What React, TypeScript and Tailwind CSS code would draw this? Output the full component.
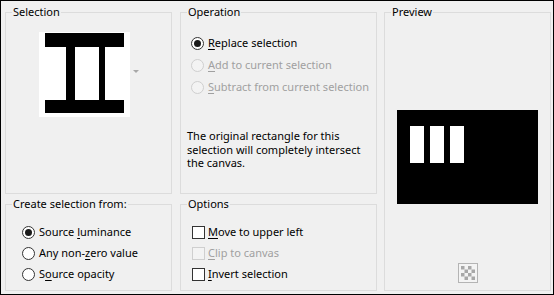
import React from 'react';

const font = { fontFamily: '"Noto Sans", "Liberation Sans", sans-serif' };

function Group({ label, className, children }: { label: string; className: string; children: React.ReactNode }) {
  return (
    <fieldset className={`border border-[#dcdcdc] box-border ${className}`}>
      <legend className="ml-[6px] px-[1px] text-[11px] leading-[16px] text-black">{label}</legend>
      {children}
    </fieldset>
  );
}

function Radio({ checked, disabled }: { checked?: boolean; disabled?: boolean }) {
  return (
    <span
      className={`flex items-center justify-center w-[13px] h-[13px] rounded-full border shrink-0 ${
        disabled ? 'border-[#cfcfcf] bg-[#f3f3f3]' : 'border-[#333333] bg-white'
      }`}
    >
      {checked && <span className="w-[7px] h-[7px] rounded-full bg-[#1a1a1a]" />}
    </span>
  );
}

function Check({ disabled }: { disabled?: boolean }) {
  return (
    <span
      className={`w-[13px] h-[13px] border shrink-0 ${
        disabled ? 'border-[#cfcfcf] bg-[#f3f3f3]' : 'border-[#333333] bg-white'
      }`}
    />
  );
}

// label with one underlined access key
function Lbl({ pre = '', k, post, disabled }: { pre?: string; k: string; post: string; disabled?: boolean }) {
  return (
    <span className={`text-[11px] whitespace-nowrap ${disabled ? 'text-[#a0a0a0]' : 'text-black'}`}>
      {pre}
      <span className="underline underline-offset-2">{k}</span>
      {post}
    </span>
  );
}

export default function App() {
  return (
    <div className="w-[554px] h-[295px] border border-black bg-[#f0f0f0] box-border pl-[4px] pt-[3px] flex" style={font}>
      {/* left column */}
      <div className="flex flex-col gap-[2px] w-[167px] shrink-0">
        <Group label="Selection" className="h-[190px]">
          <div className="flex justify-center items-center pt-[12px] pl-[1px]">
            <svg width="91" height="85" viewBox="0 0 91 85">
              <rect width="91" height="85" fill="#fff" />
              <rect x="6" y="1" width="79" height="14" fill="#000" />
              <rect x="6" y="68" width="79" height="13" fill="#000" />
              <rect x="27" y="15" width="9" height="53" fill="#000" />
              <rect x="60" y="15" width="6" height="53" fill="#000" />
            </svg>
            <svg width="6" height="4" viewBox="0 0 6 4" className="ml-[3px] -mt-[5px]">
              <path d="M0 0h6L3 3z" fill="#a8a8a8" />
            </svg>
          </div>
        </Group>
        <Group label="Create selection from:" className="h-[95px]">
          <div className="pl-[16px] pt-[10px] flex flex-col">
            <div className="h-[21px] flex items-center gap-[4px]">
              <Radio checked />
              <Lbl pre="Source " k="l" post="uminance" />
            </div>
            <div className="h-[21px] flex items-center gap-[4px]">
              <Radio />
              <Lbl pre="Any non-" k="z" post="ero value" />
            </div>
            <div className="h-[21px] flex items-center gap-[4px]">
              <Radio />
              <Lbl pre="S" k="o" post="urce opacity" />
            </div>
          </div>
        </Group>
      </div>

      {/* middle column */}
      <div className="flex flex-col gap-[2px] w-[197px] ml-[8px] shrink-0">
        <Group label="Operation" className="h-[190px]">
          <div className="pl-[10px] pt-[12px] flex flex-col">
            <div className="h-[22px] flex items-center gap-[4px]">
              <Radio checked />
              <Lbl k="R" post="eplace selection" />
            </div>
            <div className="h-[22px] flex items-center gap-[4px]">
              <Radio disabled />
              <Lbl k="A" post="dd to current selection" disabled />
            </div>
            <div className="h-[22px] flex items-center gap-[4px]">
              <Radio disabled />
              <Lbl k="S" post="ubtract from current selection" disabled />
            </div>
          </div>
          <p className="mt-[31px] pl-[6px] pr-[8px] text-[11px] leading-[13.5px] text-black">
            The original rectangle for this selection will completely intersect the canvas.
          </p>
        </Group>
        <Group label="Options" className="h-[95px]">
          <div className="pl-[11px] pt-[10px] flex flex-col">
            <div className="h-[21px] flex items-center gap-[3px]">
              <Check />
              <Lbl k="M" post="ove to upper left" />
            </div>
            <div className="h-[21px] flex items-center gap-[3px]">
              <Check disabled />
              <Lbl k="C" post="lip to canvas" disabled />
            </div>
            <div className="h-[21px] flex items-center gap-[3px]">
              <Check />
              <Lbl k="I" post="nvert selection" />
            </div>
          </div>
        </Group>
      </div>

      {/* preview */}
      <Group label="Preview" className="h-[287px] w-[167px] ml-[7px] shrink-0">
        <div className="flex flex-col items-center">
          <div className="mt-[90px] w-[141px] h-[94px] bg-black flex gap-[6px] pl-[13px] pt-[16px]">
            <div className="w-[14px] h-[37px] bg-white" />
            <div className="w-[14px] h-[37px] bg-white" />
            <div className="w-[14px] h-[37px] bg-white" />
          </div>
          <svg width="20" height="20" viewBox="0 0 20 20" className="mt-[59px]">
            <rect x="0.5" y="0.5" width="19" height="19" fill="#f4f4f4" stroke="#b4b4b4" />
            <g fill="#a8a8a8">
              <rect x="3" y="3" width="3.5" height="3.5" />
              <rect x="10" y="3" width="3.5" height="3.5" />
              <rect x="6.5" y="6.5" width="3.5" height="3.5" />
              <rect x="13.5" y="6.5" width="3.5" height="3.5" />
              <rect x="3" y="10" width="3.5" height="3.5" />
              <rect x="10" y="10" width="3.5" height="3.5" />
              <rect x="6.5" y="13.5" width="3.5" height="3.5" />
              <rect x="13.5" y="13.5" width="3.5" height="3.5" />
            </g>
          </svg>
        </div>
      </Group>
    </div>
  );
}
